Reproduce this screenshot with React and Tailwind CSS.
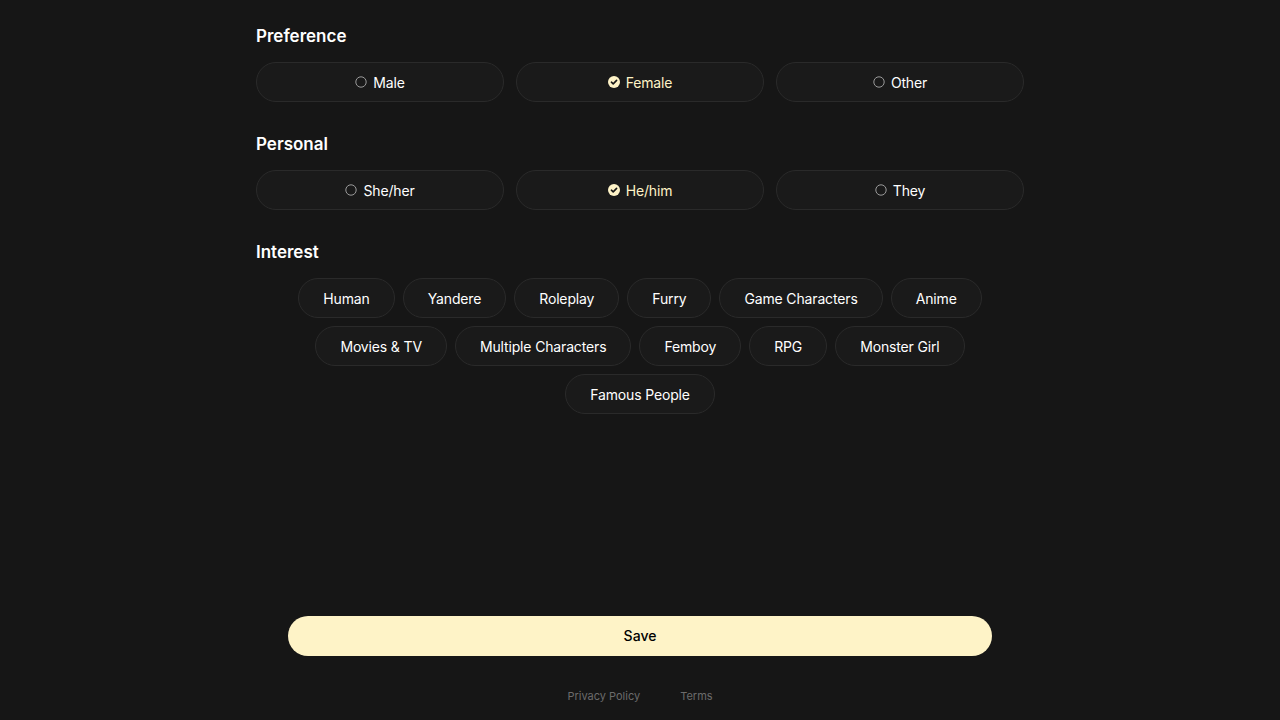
import React, { useState } from "react";

function RadioIcon() {
  return (
    <svg width="12" height="12" viewBox="0 0 12 12" className="shrink-0">
      <circle cx="6" cy="6" r="5.2" fill="none" stroke="#9a9a9a" strokeWidth="1" />
    </svg>
  );
}

function CheckIcon() {
  return (
    <svg width="12" height="12" viewBox="0 0 12 12" className="shrink-0">
      <circle cx="6" cy="6" r="6" fill="#fef3c7" />
      <path d="M3.4 6.2 L5.2 7.9 L8.6 4.4" fill="none" stroke="#161616" strokeWidth="1.6" strokeLinecap="round" strokeLinejoin="round" />
    </svg>
  );
}

function OptionRow({ options, selected, onSelect }) {
  return (
    <div className="grid grid-cols-3 gap-3">
      {options.map((o) => {
        const active = o === selected;
        return (
          <button
            key={o}
            onClick={() => onSelect(o)}
            className={
              "h-10 rounded-full border border-[#2a2a2a] bg-[#1a1a1a] flex items-center justify-center gap-[6px] text-sm font-normal tracking-[-0.15px] pt-[2px] " +
              (active ? "text-[#fef3c7]" : "text-white")
            }
          >
            <span className="-mt-[3px]">{active ? <CheckIcon /> : <RadioIcon />}</span>
            <span>{o}</span>
          </button>
        );
      })}
    </div>
  );
}

const interests = [
  "Human",
  "Yandere",
  "Roleplay",
  "Furry",
  "Game Characters",
  "Anime",
  "Movies & TV",
  "Multiple Characters",
  "Femboy",
  "RPG",
  "Monster Girl",
  "Famous People",
];

export default function App() {
  const [pref, setPref] = useState("Female");
  const [pers, setPers] = useState("He/him");
  return (
    <div
      className="h-screen w-full bg-[#161616] text-white flex flex-col overflow-hidden"
      style={{ fontFamily: "Inter, 'Noto Sans', sans-serif" }}
    >
      <div className="w-[768px] mx-auto pt-[22px] flex flex-col">
        <h2 className="text-[17px] font-semibold leading-7 mb-[12px]">Preference</h2>
        <OptionRow options={["Male", "Female", "Other"]} selected={pref} onSelect={setPref} />

        <h2 className="text-[17px] font-semibold leading-7 mt-[28px] mb-[12px]">Personal</h2>
        <OptionRow options={["She/her", "He/him", "They"]} selected={pers} onSelect={setPers} />

        <h2 className="text-[17px] font-semibold leading-7 mt-[28px] mb-[12px]">Interest</h2>
        <div className="flex flex-wrap justify-center gap-2">
          {interests.map((i) => (
            <button
              key={i}
              className="h-10 px-6 pt-[2px] rounded-full border border-[#2a2a2a] bg-[#1a1a1a] text-sm font-normal tracking-[-0.15px] text-white"
            >
              {i}
            </button>
          ))}
        </div>
      </div>

      <div className="mt-auto w-[768px] mx-auto px-8">
        <button className="w-full h-10 rounded-full bg-[#fef3c7] text-black text-sm font-medium">
          Save
        </button>
      </div>
      <div className="flex justify-center gap-10 pt-8 pb-4 text-[11px] leading-4 text-[#6b6b6b]">
        <span>Privacy Policy</span>
        <span>Terms</span>
      </div>
    </div>
  );
}
